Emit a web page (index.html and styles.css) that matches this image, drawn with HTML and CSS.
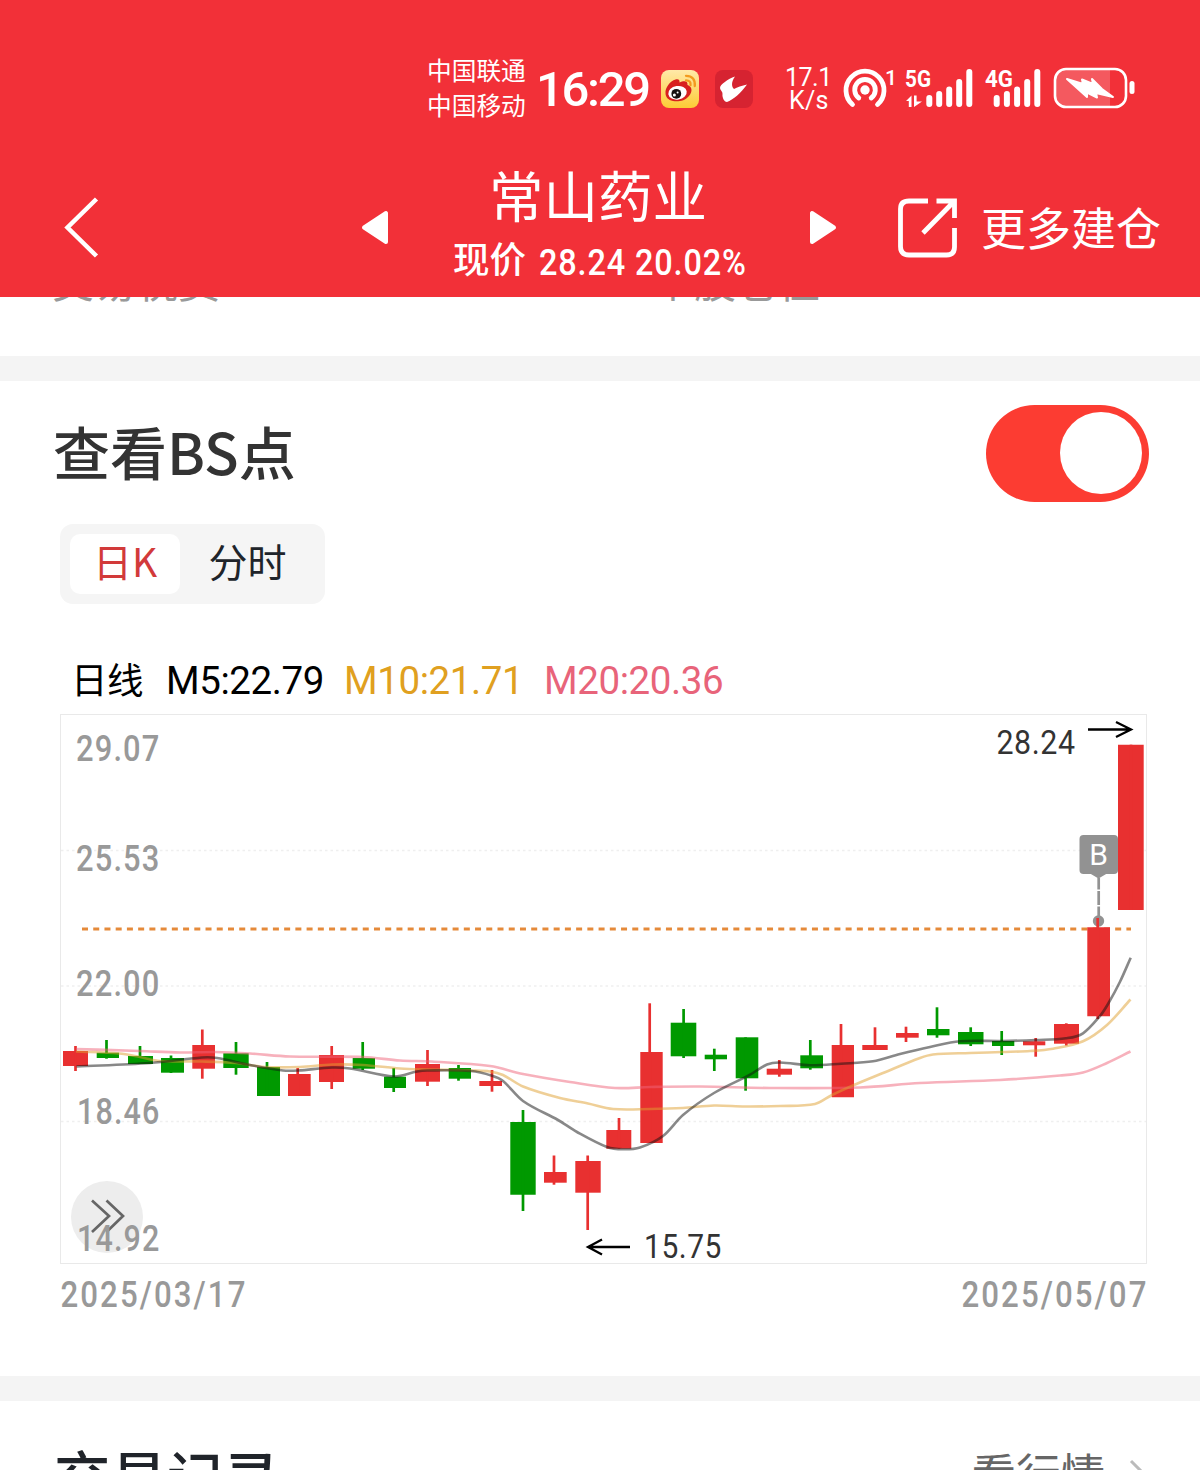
FILE: index.html
```
<!doctype html>
<html lang="zh-CN">
<head>
<meta charset="utf-8">
<title>常山药业</title>
<link rel="stylesheet" href="styles.css">
</head>

<body>
<div id="header">
	<div class="status">
		<div class="carrier"><p>中国联通</p><p>中国移动</p></div>
		<div class="time">16:29</div>
		<svg class="app" width="38" height="38" viewBox="0 0 38 38">
			<defs><linearGradient id="gold" x1="0" y1="0" x2="0" y2="1"><stop offset="0" stop-color="#ffe9a8"/><stop offset="1" stop-color="#fdcb35"/></linearGradient></defs>
			<rect width="38" height="38" rx="8" fill="url(#gold)"/>
			<path d="M4.500 23C4 18 9 11 14.500 9.500C17 8.500 19 9.500 18.500 12.500C22 11 27 10 26.500 15C31 16.500 32 21 28 26C24 31 17 32 12 31C7 30 4.500 27 4.500 23Z" fill="#d8201f"/>
			<ellipse cx="16.500" cy="22.800" rx="9.300" ry="6.800" transform="rotate(-9 16.500 22.800)" fill="#fff"/>
			<circle cx="15.300" cy="23.800" r="4.900" fill="#151010"/>
			<circle cx="13.400" cy="25" r="1.500" fill="#fff"/><circle cx="16.600" cy="22.400" r="1" fill="#fff"/>
			<path d="M25 5.800Q34.500 6 33.800 16M25 10.300Q30 10.500 29.500 15" fill="none" stroke="#f39a1e" stroke-width="2.300" stroke-linecap="round"/>
		</svg>
		<svg class="app2" width="38" height="38" viewBox="0 0 38 38">
			<rect width="38" height="38" rx="8" fill="#d62331"/>
			<path d="M20 6.500C13 9 5 14.500 5 18C5 20 8 22 7.500 24C7 27 9 32 12 32C18 30 26 23 32 14.500C27 15.500 22 17.500 19 19C16.500 17 16 12 20 6.500Z" fill="#fff"/>
		</svg>
		<div class="speed"><p>17.1</p><p>K/s</p></div>
		<svg class="signal" width="300" height="60" viewBox="840 59 300 60">
			<g fill="none" stroke="#fff" stroke-width="4.800" stroke-linecap="round">
				<path d="M852.500 104.500A19 19 0 1 1 877.500 104.500"/>
				<path d="M858.800 98A10.300 10.300 0 1 1 871.200 98"/>
			</g>
			<circle cx="865" cy="90" r="4.700" fill="#fff"/>
			<text class="num" x="885" y="84.500" textLength="12" lengthAdjust="spacingAndGlyphs">1</text>
			<text class="gen" x="905" y="87" textLength="26" lengthAdjust="spacingAndGlyphs">5G</text>
			<text class="gen" x="985" y="87" textLength="28" lengthAdjust="spacingAndGlyphs">4G</text>
			<path d="M906 101L911.500 95.500V107H908.800V101ZM914 95.500H916.600V101.500H922L914 107Z" fill="#fff"/>
			<g stroke="#fff" stroke-width="6" stroke-linecap="round">
				<path d="M929.300 98V104M939.200 94V104M949.200 89.500V104M959.200 82V104M969.300 72V104"/>
				<path d="M996.700 98V104M1006.900 94V104M1017.100 89.500V104M1027.200 82V104M1037.300 72V104"/>
			</g>
			<path d="M1110 70V106H1066Q1055.500 106 1055.500 95V81Q1055.500 70 1066 70Z" fill="#fff" opacity=".2"/>
			<rect x="1055" y="69" width="71" height="38" rx="11" fill="none" stroke="#fff" stroke-width="2.600"/>
			<rect x="1129.500" y="81" width="5" height="13" rx="2.500" fill="#fff"/>
			<path d="M1067 79L1083 84L1082 79.500L1093 84L1092 79L1102 89L1113 97L1096 93L1097 97.500L1087 92.500L1087 97Z" fill="#fff" stroke="#fff" stroke-width="2" stroke-linejoin="round"/>
		</svg>
	</div>
	<div class="nav">
		<svg class="back" width="40" height="64" viewBox="0 0 40 64"><path d="M34.500 3L5.500 31.500L34.500 60" fill="none" stroke="#fff" stroke-width="4.500"/></svg>
		<svg class="prev" width="28" height="36" viewBox="0 0 28 36"><path d="M3 17.500L25 3V32Z" fill="#fff" stroke="#fff" stroke-width="4" stroke-linejoin="round"/></svg>
		<div class="stock">
			<h1>常山药业</h1>
			<p>现价<span>28.24 20.02%</span></p>
		</div>
		<svg class="next" width="28" height="36" viewBox="0 0 28 36"><path d="M25 17.500L3 3V32Z" fill="#fff" stroke="#fff" stroke-width="4" stroke-linejoin="round"/></svg>
		<svg class="share" width="60" height="60" viewBox="0 0 60 60">
			<path d="M31 3H12Q3.500 3 3.500 11V48.500Q3.500 57 12 57H49.500Q57.500 57 57.500 49V30M26 35L56.500 4M39.500 3H57.500V20" fill="none" stroke="#fff" stroke-width="4.800"/>
		</svg>
		<div class="more">更多建仓</div>
	</div>
</div>

<div class="fees"><span>交易税费</span><span>个股仓位</span></div>

<div class="section">
	<div class="top">
		<h2>查看BS点</h2>
		<div class="switch"><i></i></div>
	</div>
	<div class="tab"><span class="active">日K</span><span>分时</span></div>
	<div class="legend">
		<span class="name">日线</span><span class="m5">M5:22.79</span><span class="m10">M10:21.71</span><span class="m20">M20:20.36</span>
	</div>
	<svg class="chart" width="1200" height="620" viewBox="0 706 1200 620">
		<rect x="60.500" y="714.500" width="1086" height="549" fill="none" stroke="#e9e9e9"/>
		<path d="M61 850.500H1146M61 986H1146M61 1121.500H1146" stroke="#efefef" stroke-width="1.500" stroke-dasharray="2.500 3"/>
		<path d="M82 929H1131" stroke="#e58a3a" stroke-width="3" stroke-dasharray="6 5.230"/>
		<circle cx="107" cy="1217" r="36" fill="#ededed"/>
		<path d="M92 1200.500L109 1216L92 1232M106.500 1200.500L123 1216L106.500 1232" fill="none" stroke="#666" stroke-width="2.700"/>
		<path d="M1098.700 878V918" stroke="#929292" stroke-width="2.700" stroke-dasharray="11.500 1.500 14 1.500"/>
		<circle cx="1098.500" cy="921" r="5.700" fill="#929292"/>
		<g id="candles"></g>
		<g id="lines"></g>
		<rect x="1079.500" y="835" width="38.500" height="39" rx="4" fill="#929292"/>
		<path d="M1090 873.500H1107L1098.500 878.500Z" fill="#929292"/>
		<text class="flag" x="1098.500" y="864.500">B</text>
		<g class="axis">
			<text x="76" y="761" textLength="84.500" lengthAdjust="spacingAndGlyphs">29.07</text>
			<text x="76" y="871" textLength="84.500" lengthAdjust="spacingAndGlyphs">25.53</text>
			<text x="76" y="996" textLength="84.500" lengthAdjust="spacingAndGlyphs">22.00</text>
			<text x="77" y="1124" textLength="83.500" lengthAdjust="spacingAndGlyphs">18.46</text>
			<text x="77" y="1251" textLength="83.500" lengthAdjust="spacingAndGlyphs">14.92</text>
			<g class="date">
				<text x="60.500" y="1307" textLength="187" lengthAdjust="spacingAndGlyphs">2025/03/17</text>
				<text x="961.500" y="1307" textLength="187" lengthAdjust="spacingAndGlyphs">2025/05/07</text>
			</g>
		</g>
		<g class="mark">
			<text x="996.500" y="754" textLength="79" lengthAdjust="spacingAndGlyphs">28.24</text>
			<text x="644" y="1258" textLength="78" lengthAdjust="spacingAndGlyphs">15.75</text>
		</g>
		<path d="M1088 729.500H1130M1116 722L1131 729.500L1116 737M630 1247H588M602 1239.500L588 1247L602 1254.500" fill="none" stroke="#000" stroke-width="2.300"/>
	</svg>
</div>

<div class="record">
	<h2>交易记录</h2>
	<div class="link">看行情
		<svg width="20" height="36" viewBox="0 0 20 36"><path d="M3 3L17 17L3 31" fill="none" stroke="#bbb" stroke-width="3"/></svg>
	</div>
</div>

<script>
var R = '#e83030', G = '#009900';

// left, right, open/close top, bottom, wick x, high, low, color
var data = [
	[63,88,1051,1066,75.5,1046,1071,R],
	[96.7,119,1052.7,1058,106.5,1040,1058.7,G],
	[128,153,1056,1064,140,1046,1064,G],
	[161,184,1058,1072.7,171,1055.5,1073,G],
	[192.3,215,1045,1068.7,202.3,1029.5,1078.7,R],
	[223.3,248.7,1053.3,1068,236,1042,1074.7,G],
	[257,280,1067,1096,267,1062,1096,G],
	[288,310.7,1074,1096,297.7,1068,1096,R],
	[319,344,1055,1082,331.7,1046,1089,R],
	[352.7,375,1058,1068.7,362.7,1042,1070,G],
	[384,406,1076.7,1088,393.7,1068,1092,G],
	[415,440,1064,1081.7,427.5,1050,1086,R],
	[448.7,471,1068,1078.7,458.5,1065,1080.7,G],
	[479.3,502,1081,1086,492,1070,1091.7,R],
	[510.3,535.7,1122,1194.7,523,1110,1211,G],
	[544,566.7,1172,1182.7,554,1155.5,1184.7,R],
	[575.3,600.7,1161,1192.7,587.7,1155.5,1230,R],
	[606.3,631.3,1130,1148.7,619,1118,1148.7,R],
	[640.3,662.7,1052,1143,649.7,1003.3,1143,R],
	[670.7,696.3,1022.7,1056.3,683.6,1009,1058,G],
	[704.7,727,1054.7,1059.3,714.3,1048.7,1071,G],
	[735.7,758.3,1037.3,1078.3,745.6,1037.3,1090.7,G],
	[766.7,792,1068.7,1074.7,779.3,1060,1076.7,R],
	[800.3,823,1055.3,1068.3,810.3,1040,1069.7,G],
	[831.7,854,1045,1097.3,841,1024,1097,R],
	[862.3,887.7,1045,1050,875,1027.3,1050,R],
	[896,918.7,1033,1037.7,906,1026.7,1042,R],
	[927,949.5,1029,1035.3,937,1007.3,1037.7,G],
	[958,983.5,1032,1044.3,970.7,1027.3,1046,G],
	[992,1014.3,1041,1046,1001.7,1031,1055,G],
	[1023,1045.3,1041.3,1045.3,1035.7,1038,1056.7,R],
	[1054,1079,1024,1043.7,1066.3,1023.3,1045.5,R],
	[1087.3,1110,927.3,1016.3,1097.7,918,1019,R],
	[1118,1143.7,744.7,910,1131,744.7,910,R]
];

var ma = [
	['#f0647a', [76,1049,140,1051,180,1052.5,215,1052,250,1053.5,290,1056.5,363,1057,400,1060.5,432,1061.5,490,1066,523,1074,570,1082,615,1088,650,1087,700,1086.5,770,1088,860,1087.5,920,1083,1000,1080,1060,1075.5,1083,1072.5,1107,1063,1130.5,1051.5]],
	['#e0a030', [76,1051.5,119,1053.5,140,1057,160,1061,202,1061.5,236,1063,265,1067,300,1067,332,1064.5,363,1065,400,1068.5,430,1069.5,471,1070.5,490,1071.5,503,1075,523,1086.5,560,1098,588,1103.5,613,1109,650,1109,683,1108,714,1105.5,745,1106.5,780,1106,815,1104,832,1095,854,1085,883,1073,920,1058,933,1054.5,970,1053,1002,1052,1030,1051,1053,1048.7,1083,1041.3,1107,1025,1130.5,999.5]],
	['#111', [76.5,1066.5,150,1063,202,1057.5,217,1058,250,1065,283,1070.5,298,1070.5,332,1067.5,350,1068.5,394,1076.5,417,1071.5,427,1070.5,471,1071,492,1075.7,503,1081,523,1101,558,1120,577,1132,607,1147,623,1149.3,640,1147.5,663,1136,683,1115,714,1093,750,1074.7,767,1064.5,780,1062.5,810,1065.3,841,1063.7,873,1061.3,900,1054,930,1047,960,1041.3,1002,1041,1036,1040,1066,1038.3,1083,1033.3,1100,1016,1108,1004,1120,981.7,1130.7,957.7]]
];

var html = '';
for(var i=0; i<data.length; i++){
	var d = data[i];
	html += '<path d="M'+d[0]+' '+d[2]+'H'+d[1]+'V'+d[3]+'H'+d[0]+'Z" fill="'+d[7]+'"/>';
	html += '<path d="M'+d[4]+' '+d[5]+'V'+d[6]+'" stroke="'+d[7]+'" stroke-width="2.7"/>';
}
document.getElementById('candles').innerHTML = html;

html = '';
for(var i=0; i<ma.length; i++){
	html += '<path d="'+ smooth(ma[i][1]) +'" fill="none" stroke="'+ma[i][0]+'" stroke-width="2.6" opacity=".5"/>';
}
document.getElementById('lines').innerHTML = html;

function smooth(p){
	var n = p.length/2, m = [], s = 'M'+p[0]+' '+p[1];
	for(var i=0; i<n; i++){
		var a = Math.max(i-1, 0), b = Math.min(i+1, n-1);
		m.push( (p[b*2+1]-p[a*2+1]) / (p[b*2]-p[a*2]) );
	}
	for(var i=0; i<n-1; i++){
		var h = (p[i*2+2]-p[i*2])/3;
		s += 'C'+(p[i*2]+h)+' '+(p[i*2+1]+h*m[i])+' '+(p[i*2+2]-h)+' '+(p[i*2+3]-h*m[i+1])+' '+p[i*2+2]+' '+p[i*2+3];
	}
	return s;
}
</script>
</body>
</html>
```
FILE: styles.css
```
body{ margin:0; width:1200px; height:1470px; overflow:hidden; background:#fff; font-family:Roboto,'Noto Sans CJK SC',sans-serif;}
h1,h2,p{ margin:0; font-weight:normal;}
svg{ display:block; flex:none;}

#header{ height:297px; background:#f23038; color:#fff;}
.status{ display:flex; align-items:center; height:148px; padding:29px 0 0 427px; box-sizing:border-box;}
.carrier{ width:109px; font-size:24.7px; line-height:35px; white-space:nowrap;}
.time{ width:125px; margin-top:2px; font-size:49px; font-weight:500; letter-spacing:-2.3px; white-space:nowrap;}
.app{ margin-right:16px;}
.app2{ margin-right:32px;}
.speed{ width:55px; font-size:25px; font-weight:500; line-height:23px; letter-spacing:-.5px;}
.speed p+p{ padding-left:4px; letter-spacing:.3px;}
.signal{ fill:#fff;}
.num{ font-size:21px; font-weight:500;}
.gen{ font-size:24px; font-weight:700;}

.nav{ display:flex; height:149px; align-items:center; padding:0 0 0 62px; box-sizing:border-box;}
.nav svg{ margin-top:10px;}
.nav .prev{ margin-left:259px;}
.stock{ width:420px; white-space:nowrap;}
.stock h1{ margin:6px 0 3px -2px; font-size:54.500px; line-height:70px; text-align:center;}
.stock p{ display:flex; padding:0 0 1px 64px; font-size:36.5px; line-height:50px; font-weight:500;}
.stock span{ width:220px; margin-left:13px; font-size:37.5px; line-height:52px; letter-spacing:1px; transform:scaleX(.865); transform-origin:0 0;}
.nav .share{ margin-left:60px;}
.more{ margin:17px 0 0 24px; font-size:45px; line-height:60px; white-space:nowrap;}

.fees{ display:flex; height:59px; padding-left:52px; overflow:hidden; color:#999; font-size:42px; line-height:50px; border-bottom:25px solid #f4f4f4;}
.fees span{ flex:none; width:600px; margin-top:-38px;}

.section{ height:995px; border-bottom:25px solid #f4f4f4; overflow:hidden;}
.top{ display:flex; justify-content:space-between; align-items:center; height:143px; padding:0 51px 0 53px;}
.top h2{ margin-top:-5px; font:500 57px/80px 'Noto Sans CJK SC',sans-serif; color:#333;}
.switch{ width:163px; height:97px; margin-top:2px; border-radius:49px; background:#fc3c32; display:flex; align-items:center; justify-content:flex-end;}
.switch i{ width:82px; height:82px; margin:-1px 7px 0 0; border-radius:50%; background:#fff;}
.tab{ display:flex; width:265px; height:80px; margin-left:60px; padding:10px; box-sizing:border-box; border-radius:13px; background:#f5f5f5; font:39px/53px 'Noto Sans CJK SC',sans-serif; color:#20242a;}
.tab span{ width:135px; text-align:center;}
.tab .active{ width:110px; height:60px; border-radius:10px; background:#fff; color:#d23a3a;}
.legend{ display:flex; margin:46px 0 0 71px; height:56px; font-size:38.500px; line-height:62px; white-space:nowrap;}
.legend span{ letter-spacing:-.4px;}
.legend .name{ width:95px; font-size:36.500px; line-height:64px;}
.m5{ width:178px;}
.m10{ width:200px; color:#e0a020;}
.m20{ color:#e8647a;}
.axis{ font-size:37.500px; font-weight:500; fill:#999; letter-spacing:1.4px;}
.date{ letter-spacing:2.500px;}
.axis text,.mark text{ font-family:Roboto,sans-serif;}
.mark{ font-size:33px; fill:#333; letter-spacing:.6px;}
.flag{ font-size:30px; fill:#fff; text-anchor:middle;}

.record{ display:flex; justify-content:space-between; height:69px; padding:0 52px 0 54px; overflow:hidden;}
.record h2{ margin-top:38px; font:500 56.500px/70px 'Noto Sans CJK SC',sans-serif; color:#20242a;}
.link{ display:flex; margin-top:45px; color:#666; font-size:44.500px; line-height:60px;}
.link svg{ margin:12px 0 0 23px;}
```
